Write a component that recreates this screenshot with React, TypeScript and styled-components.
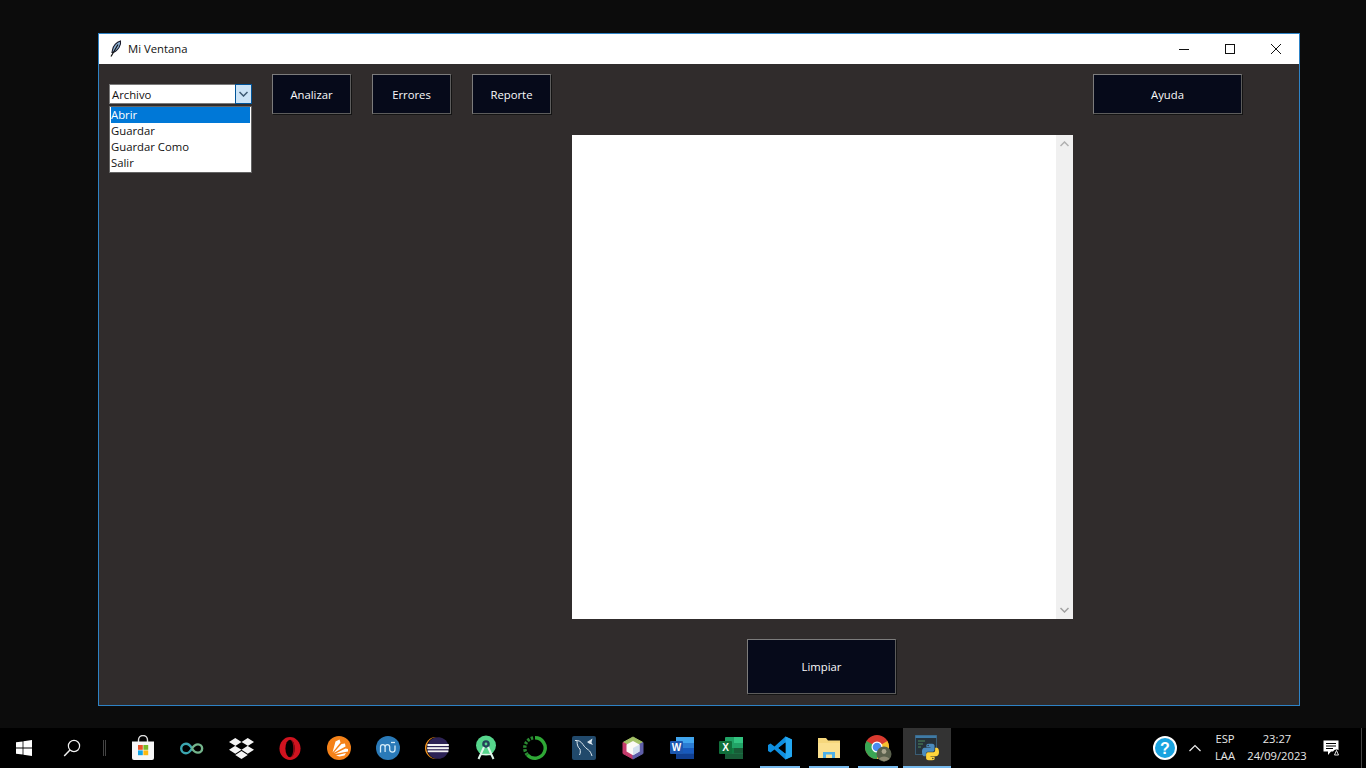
import React from "react";
import styled, { createGlobalStyle } from "styled-components";
import { FaDropbox } from "react-icons/fa";

const GlobalStyle = createGlobalStyle`
  html, body {
    margin: 0;
    height: 100%;
    background: #0c0c0c;
    overflow: hidden;
  }
  #root {
    height: 100%;
  }
`;

const Screen = styled.div`
  width: 1366px;
  height: 768px;
  display: flex;
  flex-direction: column;
  font-family: "Open Sans", "Noto Sans", sans-serif;
  font-size: 11.3px;
`;
const Desktop = styled.div`
  flex: 1;
  min-height: 0;
  padding: 33px 66px 22px 98px;
`;
const Window = styled.div`
  width: 1202px;
  height: 673px;
  box-sizing: border-box;
  border: 1px solid #2e83c6;
  display: flex;
  flex-direction: column;
  background: #302c2c;
`;
const TitleBar = styled.div`
  height: 30px;
  flex: none;
  background: #fff;
  display: flex;
  align-items: center;
  padding-left: 11px;
  color: #111;
`;
const TitleText = styled.span`
  margin: 0 0 2px 6px;
  flex: 1;
`;
const WinControl = styled.div`
  width: 46px;
  height: 30px;
  display: flex;
  align-items: center;
  justify-content: center;
`;
const Client = styled.div`
  flex: 1;
  display: flex;
  flex-direction: column;
`;
const Toolbar = styled.div`
  display: flex;
  align-items: center;
  gap: 21px;
  padding: 10px 57px 0 10px;
`;
const ComboWrap = styled.div`
  position: relative;
  width: 143px;
  height: 20px;
  margin-right: -1px;
`;
const ComboField = styled.div`
  box-sizing: border-box;
  height: 100%;
  background: #fff;
  border: 1px solid #7a7a7a;
  display: flex;
  align-items: center;
  padding-left: 2px;
  color: #111;
`;
const ComboArrow = styled.div`
  position: absolute;
  right: 0;
  top: 0;
  width: 17px;
  height: 20px;
  box-sizing: border-box;
  background: #cce4f7;
  border: 1px solid #005499;
  display: flex;
  align-items: center;
  justify-content: center;
`;
const ComboList = styled.div`
  position: absolute;
  left: 0;
  top: 22px;
  width: 143px;
  box-sizing: border-box;
  background: #fff;
  border: 1px solid #646464;
  padding: 0 1px 1px;
`;
const ComboItem = styled.div<{ $selected?: boolean }>`
  height: 16px;
  line-height: 15px;
  color: ${({ $selected }) => ($selected ? "#fff" : "#111")};
  background: ${({ $selected }) => ($selected ? "#0078d7" : "#fff")};
`;
const ActionButton = styled.div<{ $wide?: boolean; $tall?: boolean }>`
  width: ${({ $wide }) => ($wide ? "149px" : "79px")};
  height: ${({ $tall }) => ($tall ? "55px" : "40px")};
  box-sizing: border-box;
  flex: none;
  display: flex;
  align-items: center;
  justify-content: center;
  background: #060a1a;
  color: #fafafa;
  border: 1px solid #7c7c7c;
  border-right-color: #5c5c5c;
  border-bottom-color: #5c5c5c;
  box-shadow: 1px 1px 0 #141414;
`;
const PushRight = styled.div`
  margin-left: auto;
`;
const Editor = styled.div`
  margin: 21px 0 0 473px;
  width: 501px;
  height: 484px;
  background: #fff;
  display: flex;
  justify-content: flex-end;
`;
const Scrollbar = styled.div`
  width: 17px;
  background: #f0f0f0;
  display: flex;
  flex-direction: column;
  justify-content: space-between;
  align-items: center;
  padding: 6px 0;
  box-sizing: border-box;
`;
const BottomRow = styled.div`
  margin: 20px 0 0 648px;
`;
const Taskbar = styled.div`
  height: 40px;
  flex: none;
  background: #000;
  display: flex;
  align-items: stretch;
  color: #f0f0f0;
`;
const AppsStrip = styled.div`
  display: flex;
  gap: 1px;
  margin-left: 13px;
`;
const Cell = styled.div<{ $open?: boolean; $active?: boolean }>`
  position: relative;
  width: 48px;
  display: flex;
  align-items: center;
  justify-content: center;
  background: ${({ $active }) => ($active ? "#333333" : "transparent")};
  &::after {
    content: "";
    display: ${({ $open, $active }) => ($open || $active ? "block" : "none")};
    position: absolute;
    bottom: 0;
    left: ${({ $active }) => ($active ? "0" : "4px")};
    right: ${({ $active }) => ($active ? "0" : "4px")};
    height: 2px;
    background: #76b9ed;
  }
`;
const SystemCell = styled.div`
  width: 48px;
  display: flex;
  align-items: center;
  justify-content: center;
`;
const Separator = styled.div`
  width: 3px;
  height: 16px;
  margin: 12px 0 0 7px;
  border-left: 1px solid #444;
  border-right: 1px solid #444;
  box-sizing: border-box;
`;
const Tray = styled.div`
  margin-left: auto;
  display: flex;
  align-items: center;
  height: 100%;
`;
const TraySlot = styled.div<{ $w: number }>`
  width: ${({ $w }) => $w}px;
  display: flex;
  align-items: center;
  justify-content: center;
`;
const TrayText = styled.div`
  display: flex;
  flex-direction: column;
  align-items: center;
  line-height: 17px;
  margin-top: -2px;
  font-size: 11.2px;
  color: #e8e8e8;
`;
const EdgeLine = styled.div`
  width: 1px;
  height: 40px;
  background: #444;
  margin: 0 4px 0 0;
`;

const Feather = () => (
  <svg width="12" height="18" viewBox="0 0 12 18">
    <path d="M10.5 1 C6.5 2 3 6 2.5 10 L2 12.5 C4 12.5 7 10.5 9 7.5 C10.5 5 11 3 10.5 1Z" fill="#8fb4d8" stroke="#1a1a2a" strokeWidth="1.1" />
    <path d="M8 4.5 L1 16.5" stroke="#111" strokeWidth="1.2" fill="none" />
  </svg>
);

const Minimize = () => (
  <svg width="10" height="10" viewBox="0 0 10 10"><path d="M0 5.5H10" stroke="#111" strokeWidth="1" /></svg>
);
const Maximize = () => (
  <svg width="10" height="10" viewBox="0 0 10 10"><rect x="0.5" y="0.5" width="9" height="9" fill="none" stroke="#111" /></svg>
);
const CloseX = () => (
  <svg width="10" height="10" viewBox="0 0 10 10"><path d="M0 0L10 10M10 0L0 10" stroke="#111" strokeWidth="1" /></svg>
);
const SmallChevron = ({ up, color }: { up?: boolean; color: string }) => (
  <svg width="9" height="6" viewBox="0 0 9 6">
    <path d={up ? "M0.5 5L4.5 1L8.5 5" : "M0.5 1L4.5 5L8.5 1"} fill="none" stroke={color} strokeWidth="1.5" />
  </svg>
);

const StartLogo = () => (
  <svg width="16" height="16" viewBox="0 0 16 16" fill="#fff">
    <path d="M0 2.3L6.6 1.4V7.6H0ZM7.4 1.3L16 0V7.6H7.4ZM0 8.4H6.6V14.6L0 13.7ZM7.4 8.4H16V16L7.4 14.7Z" />
  </svg>
);
const SearchGlyph = () => (
  <svg width="18" height="18" viewBox="0 0 18 18" fill="none" stroke="#f2f2f2" strokeWidth="1.2">
    <circle cx="11" cy="7" r="5.6" />
    <path d="M7 11L1.2 17" strokeWidth="1.5" />
  </svg>
);
const StoreIcon = () => (
  <svg width="24" height="26" viewBox="0 0 24 26">
    <path d="M7.5 7V5a4.5 4.5 0 0 1 9 0v2" fill="none" stroke="#ddd" strokeWidth="1.4" />
    <path d="M1 6.5H23V23a2 2 0 0 1-2 2H3a2 2 0 0 1-2-2Z" fill="#f7f7f7" />
    <rect x="7" y="10" width="4.8" height="4.8" fill="#e8542a" />
    <rect x="12.4" y="10" width="4.8" height="4.8" fill="#7ab928" />
    <rect x="7" y="15.4" width="4.8" height="4.8" fill="#10a5e8" />
    <rect x="12.4" y="15.4" width="4.8" height="4.8" fill="#fdb90f" />
  </svg>
);
const ArduinoIcon = () => (
  <svg width="24" height="13" viewBox="0 0 26 14" fill="none" strokeWidth="2.6">
    <path d="M13 7C11 3.5 9 1.8 6.5 1.8A5.2 5.2 0 0 0 6.5 12.2C9 12.2 11 10.5 13 7" stroke="#3ba6b0" />
    <path d="M13 7C15 3.5 17 2.5 19.5 2.5A4.5 4.5 0 0 1 19.5 11.5C17 11.5 15 10.5 13 7" stroke="#74b58c" />
  </svg>
);
const OperaIcon = () => (
  <svg width="22" height="25" viewBox="0 0 24 26">
    <ellipse cx="12" cy="13" rx="11.5" ry="12.5" fill="#d0131f" />
    <ellipse cx="12" cy="13" rx="5" ry="9.5" fill="#000" />
    <path d="M12 3.5C16 3.5 17 8 17 13C17 18 16 22.5 12 22.5C15 21 15.5 17 15.5 13C15.5 9 15 5 12 3.5Z" fill="#8e0b14" />
  </svg>
);
const SparkIcon = () => (
  <svg width="24" height="24" viewBox="0 0 24 24" fill="#fff">
    <circle cx="12" cy="12" r="12" fill="#f58219" />
    <path d="M5.5 16.5L8.5 5.5L12.5 3.5L13.5 6.5Z" />
    <path d="M6.5 17L14.5 8L18 7.5L18.5 10.5Z" />
    <path d="M7.5 18L18.5 12.5L21 13L21 15.5Z" />
    <path d="M9 19.5L19 17L17.5 19.5L12.5 20.5Z" />
  </svg>
);
const MuseIcon = () => (
  <svg width="24" height="24" viewBox="0 0 24 24" fill="none">
    <circle cx="12" cy="12" r="12" fill="#2a7ab8" />
    <path d="M4.5 16.5V11a2.3 2.3 0 0 1 4.6 0V16M9.1 11a2.3 2.3 0 0 1 4.6 0V13.5C13.7 17 19 17 19 13.5V9.5" stroke="#d5ecf8" strokeWidth="1.3" />
    <path d="M15 6.5H19" stroke="#d5ecf8" strokeWidth="1.3" />
  </svg>
);
const EclipseIcon = () => (
  <svg width="24" height="24" viewBox="0 0 24 24">
    <circle cx="11" cy="12" r="11" fill="#f7941e" />
    <circle cx="12.4" cy="12" r="11" fill="#000" />
    <circle cx="13" cy="12" r="10.8" fill="#2c2255" />
    <rect x="2.4" y="8" width="21.4" height="2" fill="#f4f4f4" />
    <rect x="2.2" y="11.2" width="21.6" height="2" fill="#f4f4f4" />
    <rect x="2.6" y="14.4" width="20.8" height="1.8" fill="#f4f4f4" />
  </svg>
);
const AndroidStudioIcon = () => (
  <svg width="22" height="26" viewBox="0 0 22 26">
    <circle cx="11" cy="10.5" r="10" fill="#56d68c" />
    <circle cx="11" cy="9" r="3.8" fill="#25415a" />
    <circle cx="11" cy="9" r="1.4" fill="#56d68c" />
    <path d="M9 12L3.5 24M13 12L18.5 24" stroke="#dff5ea" strokeWidth="2" fill="none" />
    <path d="M5 19.5H17" stroke="#dff5ea" strokeWidth="1.4" />
  </svg>
);
const GreenRing = () => (
  <svg width="24" height="24" viewBox="0 0 24 24" fill="none">
    <path d="M12 1.8A10.2 10.2 0 1 1 4.4 18.8" stroke="#2fa836" strokeWidth="3.4" />
    <path d="M4.4 18.8A10.2 10.2 0 0 1 11 1.8" stroke="#2a8a32" strokeWidth="3.4" strokeDasharray="2.4 1.4" />
  </svg>
);
const MysqlIcon = () => (
  <svg width="24" height="24" viewBox="0 0 24 24">
    <rect width="24" height="24" rx="2" fill="#21496b" />
    <path d="M3 4.5C6.5 4 9 5.5 11 8.5C12.5 11 14.5 12.5 16.5 14C18 15 19 17 20 20M5 5C5 9 6 11.5 8 13C8.5 15 8.5 17 7.5 19" fill="none" stroke="#dbe7ee" strokeWidth="1" />
    <path d="M15 6L20.5 2.5L19.5 6.5L21 9L17 7.5Z" fill="#dbe7ee" />
  </svg>
);
const NetbeansIcon = () => (
  <svg width="22" height="24" viewBox="0 0 22 24" strokeLinejoin="round">
    <path d="M11 1L21 6.5L11 12L1 6.5Z" fill="#a4c267" stroke="#a4c267" />
    <path d="M1 6.5L11 12V23L1 17.5Z" fill="#c43a6b" stroke="#c43a6b" />
    <path d="M21 6.5L11 12V23L21 17.5Z" fill="#5f5fa8" stroke="#5f5fa8" />
    <path d="M11 5L17.5 8.6V15.6L11 19.2L4.5 15.6V8.6Z" fill="#fbfaf5" />
    <path d="M11 12L17.5 8.6V15.6L11 19.2Z" fill="#d3e0ee" />
  </svg>
);
const WordIcon = () => (
  <svg width="24" height="22" viewBox="0 0 24 22">
    <rect x="6" y="0" width="18" height="22" rx="1" fill="#2b7cd3" />
    <rect x="6" y="0" width="18" height="6" fill="#41a5ee" />
    <rect x="6" y="11" width="18" height="5.5" fill="#185abd" />
    <rect x="6" y="16.5" width="18" height="5.5" fill="#103f91" />
    <rect x="0" y="4" width="13" height="13" rx="1" fill="#1c57b0" />
    <text x="6.5" y="14" fontSize="10" fontWeight="700" fill="#fff" textAnchor="middle" fontFamily="Liberation Sans, sans-serif">W</text>
  </svg>
);
const ExcelIcon = () => (
  <svg width="24" height="22" viewBox="0 0 24 22">
    <rect x="6" y="0" width="18" height="22" rx="1" fill="#21a366" />
    <rect x="15" y="0" width="9" height="6" fill="#33c481" />
    <rect x="6" y="11" width="9" height="5.5" fill="#107c41" />
    <rect x="15" y="11" width="9" height="5.5" fill="#185c37" />
    <rect x="6" y="16.5" width="18" height="5.5" fill="#185c37" />
    <rect x="0" y="4" width="13" height="13" rx="1" fill="#10703b" />
    <text x="6.5" y="14" fontSize="10" fontWeight="700" fill="#fff" textAnchor="middle" fontFamily="Liberation Sans, sans-serif">X</text>
  </svg>
);
const VscodeIcon = () => (
  <svg width="24" height="24" viewBox="0 0 24 24">
    <path d="M17.5 0.5L24 3.5V20.5L17.5 23.5L6.5 13.5L2.5 16.5L0 15V9L2.5 7.5L6.5 10.5ZM17.5 6.5L10.5 12L17.5 17.5Z" fill="#0f8fe0" />
    <path d="M17.5 0.5L24 3.5V20.5L17.5 23.5Z" fill="#23a8f2" />
    <path d="M17.5 6.5L10.5 12L17.5 17.5Z" fill="#000" />
  </svg>
);
const FolderIcon = () => (
  <svg width="24" height="22" viewBox="0 0 24 22">
    <path d="M1 1H9L11 3.5H23V21H1Z" fill="#f6d77c" />
    <rect x="1" y="6" width="22" height="15" fill="#fbe08f" />
    <rect x="6" y="15" width="12" height="6" fill="#4db0e8" />
    <rect x="9" y="17.5" width="6" height="3.5" fill="#fbe08f" />
  </svg>
);
const ChromeIcon = () => (
  <svg width="27" height="27" viewBox="0 0 27 27">
    <circle cx="12" cy="12" r="12" fill="#d93a2f" />
    <path d="M12 12L22.4 6A12 12 0 0 1 12 24Z" fill="#f5c12f" />
    <path d="M12 12L12 24A12 12 0 0 1 1.6 6Z" fill="#3aa655" />
    <circle cx="12" cy="12" r="5.5" fill="#fff" />
    <circle cx="12" cy="12" r="4.3" fill="#4a8cf0" />
    <circle cx="19" cy="19" r="7.5" fill="#59604c" />
    <circle cx="19" cy="16.5" r="2.4" fill="#a9a58e" />
    <path d="M14 24C15 20.5 23 20.5 24.5 24L19 26.5Z" fill="#8d8a73" />
  </svg>
);
const PythonAppIcon = () => (
  <svg width="24" height="26" viewBox="0 0 24 26">
    <rect x="0.5" y="0.5" width="21" height="19" fill="#26323a" stroke="#3a5c74" />
    <rect x="0.5" y="0.5" width="21" height="2.5" fill="#3f7ba6" />
    <path d="M3 6H10M3 9H8M3 12H6" stroke="#4f8a5c" strokeWidth="1" />
    <svg x="7" y="8.5" width="17" height="17" viewBox="0 0 24 24" fillRule="evenodd">
      <path d="M11.9 0C5.8 0 6.2 2.6 6.2 2.6v2.7h5.8v.8H3.9S0 5.7 0 11.9s3.4 6 3.4 6h2v-2.9s-.1-3.4 3.4-3.4h5.7s3.2.1 3.2-3.1V3.2S18.3 0 11.9 0zM8.7 1.9a1 1 0 1 1 0 2.1 1 1 0 0 1 0-2.1z" fill="#4b8bbe" />
      <path d="M12.1 24c6.1 0 5.7-2.6 5.7-2.6v-2.7H12v-.8h8.1s3.9.4 3.9-5.8-3.4-6-3.4-6h-2v2.9s.1 3.4-3.4 3.4H9s-3.2-.1-3.2 3.1v5.3S5.7 24 12.1 24zm3.2-1.9a1 1 0 1 1 0-2.1 1 1 0 0 1 0 2.1z" fill="#ffd43b" />
    </svg>
  </svg>
);
const HelpIcon = () => (
  <svg width="24" height="24" viewBox="0 0 24 24">
    <circle cx="12" cy="12" r="11" fill="#1aa3e0" stroke="#fff" strokeWidth="2" />
    <text x="12" y="18" fontSize="16" fontWeight="700" fill="#fff" textAnchor="middle" fontFamily="Liberation Sans, sans-serif">?</text>
  </svg>
);
const TrayChevron = () => (
  <svg width="12" height="8" viewBox="0 0 12 8"><path d="M0.5 7L6 1.5L11.5 7" fill="none" stroke="#eee" strokeWidth="1.2" /></svg>
);
const NotifyIcon = () => (
  <svg width="18" height="17" viewBox="0 0 18 17">
    <path d="M0.5 0.5H15.5V11.5H8L5 15V11.5H0.5Z" fill="#fff" />
    <path d="M3 3.5H13M3 6H13M3 8.5H10" stroke="#000" strokeWidth="1" />
    <circle cx="13.5" cy="13" r="3.5" fill="#000" />
    <path d="M11.5 15L13.5 10.5L15.5 15Z" fill="none" stroke="#fff" strokeWidth="0.9" />
  </svg>
);

export default function App() {
  return (
    <Screen>
      <GlobalStyle />
      <Desktop>
        <Window>
          <TitleBar>
            <Feather />
            <TitleText>Mi Ventana</TitleText>
            <WinControl><Minimize /></WinControl>
            <WinControl><Maximize /></WinControl>
            <WinControl><CloseX /></WinControl>
          </TitleBar>
          <Client>
            <Toolbar>
              <ComboWrap>
                <ComboField>Archivo</ComboField>
                <ComboArrow><SmallChevron color="#3d5a73" /></ComboArrow>
                <ComboList>
                  <ComboItem $selected>Abrir</ComboItem>
                  <ComboItem>Guardar</ComboItem>
                  <ComboItem>Guardar Como</ComboItem>
                  <ComboItem>Salir</ComboItem>
                </ComboList>
              </ComboWrap>
              <ActionButton>Analizar</ActionButton>
              <ActionButton>Errores</ActionButton>
              <ActionButton>Reporte</ActionButton>
              <PushRight>
                <ActionButton $wide>Ayuda</ActionButton>
              </PushRight>
            </Toolbar>
            <Editor>
              <Scrollbar>
                <SmallChevron up color="#b0b0b0" />
                <SmallChevron color="#a0a0a0" />
              </Scrollbar>
            </Editor>
            <BottomRow>
              <ActionButton $wide $tall>Limpiar</ActionButton>
            </BottomRow>
          </Client>
        </Window>
      </Desktop>
      <Taskbar>
        <SystemCell><StartLogo /></SystemCell>
        <SystemCell><SearchGlyph /></SystemCell>
        <Separator />
        <AppsStrip>
          <Cell><StoreIcon /></Cell>
          <Cell><ArduinoIcon /></Cell>
          <Cell><FaDropbox size={25} color="#f4f4f4" /></Cell>
          <Cell><OperaIcon /></Cell>
          <Cell><SparkIcon /></Cell>
          <Cell><MuseIcon /></Cell>
          <Cell><EclipseIcon /></Cell>
          <Cell><AndroidStudioIcon /></Cell>
          <Cell><GreenRing /></Cell>
          <Cell><MysqlIcon /></Cell>
          <Cell><NetbeansIcon /></Cell>
          <Cell><WordIcon /></Cell>
          <Cell><ExcelIcon /></Cell>
          <Cell $open><VscodeIcon /></Cell>
          <Cell $open><FolderIcon /></Cell>
          <Cell $open><ChromeIcon /></Cell>
          <Cell $active><PythonAppIcon /></Cell>
        </AppsStrip>
        <Tray>
          <TraySlot $w={30}><HelpIcon /></TraySlot>
          <TraySlot $w={30}><TrayChevron /></TraySlot>
          <TraySlot $w={30}>
            <TrayText><span>ESP</span><span>LAA</span></TrayText>
          </TraySlot>
          <TraySlot $w={74}>
            <TrayText><span>23:27</span><span>24/09/2023</span></TrayText>
          </TraySlot>
          <TraySlot $w={36}><NotifyIcon /></TraySlot>
          <TraySlot $w={11} />
          <EdgeLine />
        </Tray>
      </Taskbar>
    </Screen>
  );
}
